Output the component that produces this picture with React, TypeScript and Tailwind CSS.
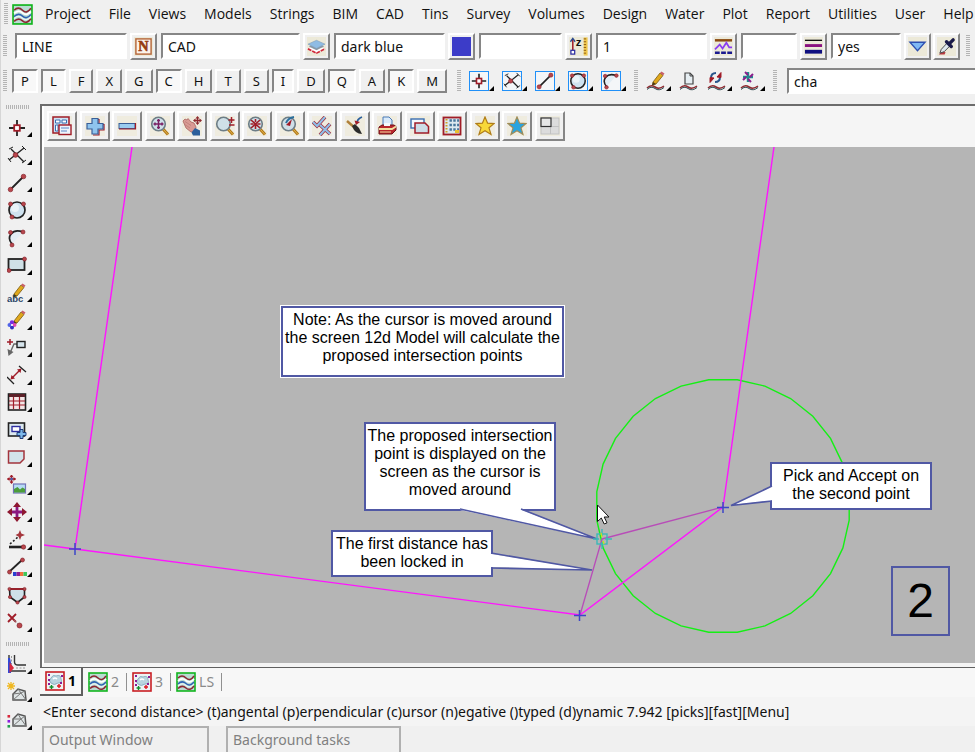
import { ReactNode, useState } from 'react';

const MENUS = [
  'Project', 'File', 'Views', 'Models', 'Strings', 'BIM', 'CAD', 'Tins', 'Survey',
  'Volumes', 'Design', 'Water', 'Plot', 'Report', 'Utilities', 'User', 'Help',
];

const SNAPS = ['P', 'L', 'F', 'X', 'G', 'C', 'H', 'T', 'S', 'I', 'D', 'Q', 'A', 'K', 'M'];

const RAISED = 'border-2 border-t-white border-l-white border-r-[#868686] border-b-[#868686] bg-[#f0f0f0]';
const SUNKEN = 'border-2 border-t-[#868686] border-l-[#868686] border-r-white border-b-white';

const RED = '#a01c28';
const DARK = '#222222';

function Dot({ x, y, r = 2 }: { x: number; y: number; r?: number }) {
  return <circle cx={x} cy={y} r={r} fill="#b8464c" stroke="#7c1a22" strokeWidth="0.6" />;
}

function Pencil() {
  return (
    <g>
      <path d="M7 11 L14 2 L17 4.5 L10 13 L6.5 14Z" fill="#e0a81c" stroke="#7a5a10" strokeWidth="0.8" />
      <path d="M14 2 L15.5 0.5 L18.5 2.5 L17 4.5Z" fill="#c8606a" />
      <path d="M7 11 L10 13 L6 14.5Z" fill="#4a3a1a" />
    </g>
  );
}

function Lens() {
  return (
    <g>
      <path d="M13 13 L18 18.5" stroke="#b07818" strokeWidth="3" />
      <path d="M13 13 L18 18.5" stroke="#e8b850" strokeWidth="1" />
      <circle cx="8.5" cy="8" r="6.8" fill="#cfe0e8" stroke="#6d7d86" strokeWidth="1.6" />
    </g>
  );
}

function Squiggle() {
  return (
    <g fill="none" strokeWidth="1.6">
      <path d="M1 17 Q5 13 9 16 T18 15" stroke="#8e2a30" />
      <path d="M1 18.5 Q5 14.5 9 17.5 T18 16.5" stroke="#2f4a50" strokeWidth="1" />
    </g>
  );
}

// drawn on a 20x20 grid
const ICONS: Record<string, ReactNode> = {
  point: (
    <g fill="none" strokeWidth="1.8">
      <path d="M10 2V7M10 13V18M2 10H7M13 10H18" stroke={DARK} />
      <rect x="7.2" y="7.2" width="5.6" height="5.6" stroke={RED} fill="#fff" />
    </g>
  ),
  cross: (
    <g>
      <path d="M2 15 L17 3 M4 4 L17 17" stroke={DARK} strokeWidth="1.4" />
      <path d="M2 4L6 2M1 13L4 17M15 1L19 5M15 18L19 15" stroke={DARK} />
      <Dot x={8.5} y={10} r={2.4} />
    </g>
  ),
  line: (
    <g>
      <path d="M4 16 L16 4" stroke={DARK} strokeWidth="1.8" />
      <Dot x={3.5} y={16.5} r={2.3} />
      <Dot x={16.5} y={3.5} r={2.3} />
    </g>
  ),
  circle: (
    <g>
      <circle cx="10" cy="10" r="8" fill="#cfe2ef" stroke={DARK} strokeWidth="1.7" />
      <circle cx="8" cy="8" r="4" fill="#eaf3f8" />
      <Dot x={3.5} y={4} />
      <Dot x={16.5} y={4} />
      <Dot x={5} y={17} />
    </g>
  ),
  arc: (
    <g>
      <path d="M5 16 A8 8 0 0 1 16 4 L16 4Z" fill="#e3edf4" />
      <path d="M5 16 C-1 9 5 0 16 4" fill="none" stroke={DARK} strokeWidth="1.7" />
      <Dot x={3.5} y={4.5} />
      <Dot x={16} y={4} />
      <Dot x={5} y={17} />
    </g>
  ),
  rect: (
    <g>
      <rect x="1.5" y="4" width="16" height="11" fill="#cfe0e6" stroke={DARK} strokeWidth="1.8" />
      <Dot x={17.5} y={4} />
      <Dot x={2} y={15.5} />
    </g>
  ),
  text: (
    <g>
      <Pencil />
      <text x="0" y="19" fontSize="9.5" fontWeight="bold" fontFamily="Liberation Sans, sans-serif" fill="#2c4668">abc</text>
    </g>
  ),
  symbol: (
    <g>
      <Pencil />
      <circle cx="5" cy="12.5" r="2.2" fill="#7a2be0" />
      <circle cx="2.5" cy="15" r="2" fill="#4f63e8" />
      <circle cx="7.5" cy="15" r="2" fill="#e04bb0" />
      <circle cx="5" cy="17.5" r="2" fill="#2f2fc0" />
      <circle cx="5" cy="15" r="1" fill="#fff" />
    </g>
  ),
  leader: (
    <g fill="none">
      <path d="M3 1V7M0 4H6" stroke={RED} strokeWidth="1.5" />
      <path d="M10 6H7L3 15" stroke="#666" strokeWidth="1.4" />
      <path d="M0.5 11L1.5 18L6.5 14Z" fill="#666" />
      <rect x="10" y="3.5" width="8" height="6" fill="#d5e4ec" stroke={DARK} strokeWidth="1.4" />
    </g>
  ),
  dimension: (
    <g>
      <path d="M5 13 L13 5" stroke={RED} strokeWidth="1.5" />
      <path d="M3.5 14.5L4.5 10L8 13.5ZM14.5 3.5L10 4.5L13.5 8Z" fill={RED} />
      <path d="M0 12L7 19M12 1L19 7" stroke={DARK} strokeWidth="1.3" />
    </g>
  ),
  table: (
    <g>
      <rect x="1.5" y="2" width="17" height="16" fill="#f3e6e6" stroke={DARK} strokeWidth="1.6" />
      <rect x="2" y="2" width="16" height="3" fill="#5c2028" />
      <path d="M6.5 5V17M12.5 5V17M2 9H18M2 13H18" stroke={RED} strokeWidth="1.2" />
    </g>
  ),
  window: (
    <g>
      <rect x="1.5" y="3" width="16" height="13" fill="#dce9ef" stroke={DARK} strokeWidth="1.6" />
      <rect x="5" y="6.5" width="8" height="5" fill="#fff" stroke="#2e2ea0" strokeWidth="1.4" />
      <path d="M13 9.5h3v3h3v3h-3v3h-3v-3h-3v-3h3z" fill="#7db8e8" stroke="#1f3a78" />
    </g>
  ),
  shape: <path d="M1.5 4H17V12L13 16H1.5Z" fill="#d3e3ea" stroke="#a3343c" strokeWidth="1.5" />,
  image: (
    <g>
      <path d="M4.5 0V8M0.5 4H8.5" stroke={RED} strokeWidth="1.6" />
      <path d="M4.5 0L6.5 2H2.5ZM4.5 9L6.5 6.5H2.5ZM0 4L2.5 2V6ZM9 4L6.5 2V6Z" fill={RED} />
      <rect x="3.3" y="2.8" width="2.4" height="2.4" fill="#4862b0" />
      <rect x="6.5" y="9" width="12" height="9" fill="#b6dcf4" stroke="#7273b8" strokeWidth="1.2" />
      <path d="M7 17.5V14L10.5 12L13 14.5L15.5 12.5L18 14V17.5Z" fill="#4c9d3a" />
    </g>
  ),
  move: (
    <g>
      <path d="M10 3V17M3 10H17" stroke="#8c1780" strokeWidth="2.8" />
      <path d="M10 0L14 5H6ZM10 20L14 15H6ZM0 10L5 6V14ZM20 10L15 6V14Z" fill="#8e1730" />
    </g>
  ),
  explode: (
    <g>
      <path d="M2 17H15" stroke={DARK} strokeWidth="2.6" />
      <Dot x={16.5} y={17} r={2.2} />
      <path d="M3 14L11 7" stroke={DARK} strokeWidth="1.6" strokeDasharray="2 2" />
      <path d="M13 0L14.3 3.5L18 5L14.3 6.5L13 10L11.5 6.5L8.5 5L11.5 3.5Z" fill="#a5363c" />
    </g>
  ),
  colour: (
    <g>
      <path d="M2 15L15 3" stroke={DARK} strokeWidth="1.8" />
      <Dot x={2.5} y={15} />
      <Dot x={15.5} y={3} />
      <rect x="6" y="15" width="3.5" height="4" fill="#2a3ed0" />
      <rect x="9.5" y="15" width="3.5" height="4" fill="#8a1e96" />
      <rect x="13" y="15" width="3.5" height="4" fill="#f0703c" />
      <rect x="16.5" y="15" width="3.5" height="4" fill="#3cc85a" />
    </g>
  ),
  polygon: (
    <g>
      <path d="M2.5 4H17.5V12L10.5 17.5L3 12Z" fill="#cfe0e8" stroke={DARK} strokeWidth="1.6" />
      <path d="M2.5 4H17.5" stroke={RED} strokeWidth="1.8" />
      <Dot x={2.5} y={4} r={1.6} />
      <Dot x={17.5} y={4} r={1.6} />
      <Dot x={3} y={12} r={1.6} />
      <Dot x={17.5} y={12} r={1.6} />
      <Dot x={10.5} y={17.5} r={1.6} />
    </g>
  ),
  remove: (
    <g>
      <path d="M1 2L9 10M9 2L1 10" stroke={RED} strokeWidth="1.8" />
      <path d="M7 8L12 13" stroke="#888" strokeDasharray="1 1" />
      <Dot x={12.5} y={13.5} r={2.5} />
    </g>
  ),
  road: (
    <g>
      <path d="M2 1V19" stroke="#333" strokeWidth="1.4" />
      <path d="M7.5 1V8Q7.5 11 11 11H19M4 17H19" fill="none" stroke="#333" strokeWidth="1.4" />
      <path d="M4.5 2V10M9 14H18" stroke="#999" strokeDasharray="2 1.5" />
      <path d="M1 4H3L4.5 11L4 19H1Z" fill="#2f48d8" />
      <path d="M2.5 8L7 14L2.5 19Z" fill="#d8283c" />
    </g>
  ),
  surfaceNew: (
    <g>
      <path d="M4 0V8M0 4H8M1 1L7 7M7 1L1 7" stroke="#f0b820" strokeWidth="1.3" />
      <path d="M6 18V12L11 7L18 9L19 18Z" fill="#dfe5e6" stroke="#555" strokeWidth="1.5" />
      <path d="M6 18L14 11L19 18M11 7L14 11L18 9M6 12L14 11" fill="none" stroke="#777" />
    </g>
  ),
  surfaceList: (
    <g>
      <path d="M6 16V9L11 4L18 6L19 16Z" fill="#dfe5e6" stroke="#555" strokeWidth="1.5" />
      <path d="M6 16L14 9L19 16M11 4L14 9L18 6M6 9L14 9" fill="none" stroke="#777" />
      <rect x="0.5" y="5" width="2.6" height="2.6" fill="#d8283c" />
      <rect x="0.5" y="10" width="2.6" height="2.6" fill="#8a1ee0" />
      <rect x="0.5" y="15" width="2.6" height="2.6" fill="#1fa04a" />
    </g>
  ),
  pencilString: <g><Squiggle /><Pencil /></g>,
  pageString: (
    <g>
      <Squiggle />
      <path d="M6 2H11L14 5V13H6Z" fill="#e6eef2" stroke="#444" strokeWidth="1.2" />
      <path d="M11 2V5H14" fill="none" stroke="#444" />
    </g>
  ),
  swapString: (
    <g>
      <Squiggle />
      <path d="M4 7Q4 2 9 2" fill="none" stroke="#29558c" strokeWidth="2" />
      <path d="M13 6Q13 11 8 11" fill="none" stroke="#29558c" strokeWidth="2" />
      <path d="M10 6L14 1.5V6.5ZM7 7L3 11.5V6.5Z" fill={RED} stroke={RED} />
    </g>
  ),
  nodeString: (
    <g>
      <Squiggle />
      <path d="M8 1V11M3 6H13" stroke="#1c8f8f" strokeWidth="2.4" />
      <path d="M5 1L8 4M13 3L10 6M11 11L8 8M3 9L6 6" stroke="#8a1e8a" strokeWidth="2" />
    </g>
  ),
  menuWindow: (
    <g>
      <rect x="1" y="1" width="16" height="16" fill="#cfe3f3" stroke={RED} strokeWidth="1.5" />
      <path d="M3.5 4H8V7H3.5ZM10 4H14.5V7H10ZM3.5 9H6V15H3.5Z" fill="#fff" stroke="#3a6eb0" />
      <rect x="7" y="9" width="12" height="9.5" fill="#eef4fb" stroke={RED} strokeWidth="1.4" />
      <path d="M9 12H17M9 15H15" stroke="#5a86c8" strokeWidth="1.2" />
    </g>
  ),
  plus: (
    <g>
      <path d="M8 3.5h6v5h5v5.5h-5v5h-6" fill="none" stroke={RED} strokeWidth="1.2" />
      <path d="M7 2.5h6v5h5v5.5h-5v5h-6v-5h-5v-5.5h5z" fill="#8fc4ee" stroke="#3a5f98" strokeWidth="1.2" />
    </g>
  ),
  minus: (
    <g>
      <rect x="2" y="7.5" width="16" height="5" fill="#9accf0" stroke="#3a5f98" />
      <path d="M18.5 7V13H2" fill="none" stroke={RED} strokeWidth="1.2" />
    </g>
  ),
  fit: <g><Lens /><path d="M8.5 3V13M3.5 8H13.5M7 4.5H10M7 11.5H10M5 6.5V9.5M12 6.5V9.5" stroke="#7b2064" strokeWidth="1.5" /></g>,
  pan: (
    <g>
      <path d="M1 5L3 3L5 4L6 2.5L9 6L12 7L14 11L13.5 14L9 16L4 12Z" fill="#d99a94" stroke="#a8645f" strokeWidth="0.8" />
      <path d="M2 8L8 12M3 5.5L9 9.5" stroke="#b87a74" strokeWidth="0.7" />
      <path d="M13 12L18 14.5V19.5H11L9.5 16.5Z" fill="#2c5f9c" />
      <path d="M15.5 1V8M12 4.5H19" stroke="#8e2a30" strokeWidth="1.4" />
      <path d="M15.5 0L17.5 2.5H13.5ZM15.5 9L17.5 6.5H13.5ZM11 4.5L13.5 2.5V6.5ZM20 4.5L17.5 2.5V6.5Z" fill="#8e2a30" />
    </g>
  ),
  zoom: <g><Lens /><path d="M16.5 1V7M13.5 4H19.5M14 9H19.5" stroke={RED} strokeWidth="1.5" /></g>,
  shrink: <g><Lens /><path d="M4 4L13 12M13 4L4 12M8.5 3V6M8.5 10V13M3.5 8H6.5M10.5 8H13.5" stroke={RED} strokeWidth="1.6" /></g>,
  previous: <g><Lens /><path d="M6 9L10 10L12 3Z" fill={RED} /><path d="M6 7Q8 2 14 1" fill="none" stroke="#2c6f9c" strokeWidth="2" /></g>,
  toggle: (
    <g fill="none">
      <path d="M1 6L5 10L13 1" stroke="#a03040" strokeWidth="3.6" />
      <path d="M1 6L5 10L13 1" stroke="#8fc0ea" strokeWidth="2" />
      <path d="M8 9L18 18M18 8L8 19" stroke="#a03040" strokeWidth="3.6" />
      <path d="M8 9L18 18M18 8L8 19" stroke="#8fc0ea" strokeWidth="2" />
    </g>
  ),
  brush: (
    <g>
      <path d="M2 5L10 12" stroke="#b0803a" strokeWidth="2.4" />
      <path d="M7 10L10 8L14 12L17 18Q10 18 7 10Z" fill="#2b2b2b" />
      <path d="M12 7Q12 3 17 1" fill="none" stroke="#2c5f9c" strokeWidth="1.8" />
      <path d="M9.5 4.5L15 6L11 9Z" fill={RED} />
    </g>
  ),
  print: (
    <g>
      <path d="M6 1H12L15 4V10H6Z" fill="#d9eafa" stroke="#4a7ab8" />
      <path d="M2 11L5 9H17L19 10.5V14L15 18H2Z" fill="#b8262c" stroke="#6e1218" />
      <path d="M2 13H15L19 10.5" fill="none" stroke="#f0dfa0" strokeWidth="1.8" />
      <path d="M3 16H14" stroke="#f0dfa0" />
      <path d="M7 7H13V10H7Z" fill="#f4f8fc" />
    </g>
  ),
  copy: (
    <g>
      <rect x="1" y="3" width="13" height="9" fill="#f3f8fc" stroke="#3a6eb0" strokeWidth="1.4" />
      <path d="M5 7H15L18.5 10.5V17H5Z" fill="#cddde6" stroke={RED} strokeWidth="1.5" />
    </g>
  ),
  grid: (
    <g>
      <rect x="1.5" y="1.5" width="17" height="17" fill="#dce8ef" stroke={RED} strokeWidth="1.8" />
      <path d="M4.5 3V17" stroke="#d0a020" strokeWidth="2" strokeDasharray="1.5 1.5" />
      <path d="M7.5 4.5H17M7.5 9H17M7.5 13.5H17" stroke="#46769c" strokeWidth="2.6" strokeDasharray="2.4 1.4" />
      <rect x="13" y="14" width="4" height="3" fill="#e8c030" />
    </g>
  ),
  star: <path d="M10 1L12.6 7.2L19 7.6L14 11.8L16 18.5L10 14.8L4 18.5L6 11.8L1 7.6L7.4 7.2Z" fill="#f8d838" stroke="#b07c18" strokeWidth="1.2" />,
  starBlue: <path d="M10 1L12.6 7.2L19 7.6L14 11.8L16 18.5L10 14.8L4 18.5L6 11.8L1 7.6L7.4 7.2Z" fill="#28a4e0" stroke="#a08c58" strokeWidth="1.2" />,
  layout: (
    <g>
      <rect x="1" y="2" width="18" height="16" fill="#dcdcdc" stroke="#c2c2c2" />
      <path d="M10.5 2V18M1 10.5H19" stroke="#c2c2c2" />
      <rect x="1" y="2" width="10" height="8.5" fill="#e6e6e6" stroke="#333" strokeWidth="1.2" />
    </g>
  ),
  name: (
    <g>
      <rect x="2" y="2" width="16" height="16" fill="#fbf2ea" stroke="#b5673a" strokeWidth="1.5" />
      <text x="10" y="15.2" textAnchor="middle" fontSize="15" fontWeight="bold" fontFamily="Liberation Serif, serif" fill="#963c10" stroke="#963c10" strokeWidth="0.6">N</text>
    </g>
  ),
  layers: (
    <g>
      <path d="M1 12.5L10 17L19 12.5L10 9Z" fill="#fff" />
      <path d="M1 12.5L10 17L19 12.5" fill="none" stroke="#d02838" strokeWidth="1.8" strokeDasharray="4 1" />
      <path d="M2 10L10 14L18 10L10 6Z" fill="#8a98a4" />
      <path d="M1 7.5L10 12L19 7.5L10 3.5Z" fill="#8fbce4" stroke="#7f9cb4" strokeWidth="0.6" />
    </g>
  ),
  swatch: <rect x="0" y="0" width="20" height="20" fill="#3c3cc8" />,
  height: (
    <g>
      <path d="M4 2V14" stroke={RED} strokeWidth="1.6" />
      <path d="M1.5 5L4 1.5L6.5 5" fill="none" stroke="#2a4a90" strokeWidth="1.4" />
      <rect x="2" y="14" width="4" height="4" fill="#fff" stroke="#2a2aa0" strokeWidth="1.3" />
      <text x="7" y="9.5" fontSize="12" fontWeight="bold" fontFamily="Liberation Sans, sans-serif" fill="#111">z</text>
      <rect x="15.5" y="0.5" width="4" height="19" fill="#f0c850" />
      <path d="M15.5 2H18M15.5 5H18M15.5 8H18M15.5 11H18M15.5 14H18M15.5 17H18" stroke="#8a5a10" />
    </g>
  ),
  styles: (
    <g fill="none">
      <path d="M1 3.5H19" stroke="#8a4a10" strokeWidth="2.6" />
      <path d="M1 13L6 8L9 12L13 6L16 11H19" stroke="#8a3cf0" strokeWidth="1.8" />
      <path d="M1 16.5H19" stroke="#1a1a90" strokeWidth="2.6" strokeDasharray="5 1.5" />
    </g>
  ),
  weight: (
    <g>
      <path d="M1 3.5H19" stroke="#111" strokeWidth="1.4" />
      <path d="M1 9H19" stroke="#8a1080" strokeWidth="3" />
      <path d="M1 15.5H19" stroke="#101080" strokeWidth="4" />
    </g>
  ),
  tinable: <path d="M2 5.5H18L10 14.5Z" fill="#7fb8f4" stroke="#2d4fb0" strokeWidth="1.4" />,
  dropper: (
    <g>
      <path d="M2 18.5L5 15L9 16L8 18.5Z" fill="#b83a40" />
      <path d="M3 17L4.5 13L11 6L14 9L7.5 15.5Z" fill="#dfe8ee" stroke="#444" />
      <path d="M10 5L15 10M12.5 7.5L17 3" stroke="#1a1a48" strokeWidth="3.6" strokeLinecap="round" />
    </g>
  ),
  plan: (
    <g>
      <rect x="1" y="1" width="18" height="18" fill="#b9dcd2" stroke="#12b41e" strokeWidth="1.6" />
      <path d="M2 6Q6 2 10 6T18 4" fill="none" stroke="#8c2632" strokeWidth="1.5" />
      <path d="M2 9Q6 5 10 8.5T18 7" fill="none" stroke="#fff" strokeWidth="1.7" />
      <path d="M2 12Q6 8 10 11.5T18 10" fill="none" stroke="#2f62b4" strokeWidth="1.5" />
      <path d="M2 14Q6 10 10 13.5T18 12" fill="none" stroke="#e8f4f4" strokeWidth="1.2" />
      <path d="M2 16.5Q6 12.5 10 16T18 14" fill="none" stroke="#8c2632" strokeWidth="1.5" />
    </g>
  ),
  perspective: (
    <g>
      <rect x="1" y="1" width="18" height="18" fill="#edf3f5" stroke="#c81e24" strokeWidth="1.6" />
      <path d="M6 12Q3 10 6 7Q8 3 11 5Q16 3 16 8Q18 12 13 12Q9 15 6 12Z" fill="#b9d5e0" stroke="#8fb2c2" />
      <path d="M8 8Q10 6 12 8" fill="none" stroke="#fff" strokeWidth="1.5" />
      <path d="M3 4H5M3 9H5M3 13H5M16 5H18M15 12H17" stroke="#8a1e96" strokeWidth="2" />
      <path d="M6.5 14V18M4.5 16H8.5" stroke="#128c28" strokeWidth="1.4" />
      <path d="M14 13V17M12 15H16" stroke="#e01820" strokeWidth="1.4" />
    </g>
  ),
};

function Icon({ name, className = 'size-5' }: { name: string; className?: string }) {
  return (
    <svg viewBox="0 0 20 20" className={`shrink-0 ${className}`} aria-hidden="true">
      {ICONS[name]}
    </svg>
  );
}

function Corner() {
  return (
    <svg viewBox="0 0 5 5" className="size-[5px] shrink-0" aria-hidden="true">
      <path d="M5 0V5H0Z" fill="#000" />
    </svg>
  );
}

function Grip() {
  return (
    <div className="h-[22px] w-1 shrink-0 bg-[repeating-linear-gradient(180deg,#b4b4b4_0_1px,#f0f0f0_1px_2px)]" />
  );
}

function SideGrip() {
  return (
    <div className="ml-[5px] h-1 w-6 shrink-0 bg-[repeating-linear-gradient(90deg,#b4b4b4_0_1px,#f0f0f0_1px_2px)]" />
  );
}

function Field({ label, value, width, icon }: { label: string; value: string; width: string; icon: string }) {
  const [text, setText] = useState(value);
  return (
    <div className="mr-1 flex shrink-0 items-center gap-[3px]">
      <input
        aria-label={label}
        value={text}
        onChange={(e) => setText(e.target.value)}
        className={`h-[26px] bg-white px-[5px] outline-none ${SUNKEN} ${width}`}
      />
      <button type="button" aria-label={`Choose ${label}`} className={`flex size-[27px] items-center justify-center ${RAISED}`}>
        <Icon name={icon} className="size-[19px] bg-[#ece9d8]" />
      </button>
    </div>
  );
}

const SNAP_TOOLS = ['point', 'cross', 'line', 'circle', 'arc'];

const DRAW_TOOLS = [
  'point', 'cross', 'line', 'circle', 'arc', 'rect', 'text', 'symbol', 'leader', 'dimension',
  'table', 'window', 'shape', 'image', 'move', 'explode', 'colour', 'polygon', 'remove',
];

const SURFACE_TOOLS = ['road', 'surfaceNew', 'surfaceList'];

const VIEW_TOOLS = [
  'menuWindow', 'plus', 'minus', 'fit', 'pan', 'zoom', 'shrink', 'previous',
  'toggle', 'brush', 'print', 'copy', 'grid', 'star', 'starBlue', 'layout',
];

const VIEWS = [
  { label: '1', icon: 'perspective' },
  { label: '2', icon: 'plan' },
  { label: '3', icon: 'perspective' },
  { label: 'LS', icon: 'plan' },
];

function SideTool({ name }: { name: string }) {
  return (
    <button type="button" aria-label={name} className="flex items-center pl-1.5">
      <Icon name={name} className="size-5" />
      <span className="self-end pb-1"><Corner /></span>
    </button>
  );
}

// the view draws circles as 28 chords at this zoom
const SIDES = 28;
const circlePoints = Array.from({ length: SIDES }, (_, i) => {
  const a = ((i + 0.5) * 2 * Math.PI) / SIDES;
  return `${(723 + 127 * Math.sin(a)).toFixed(1)},${(506 - 127 * Math.cos(a)).toFixed(1)}`;
}).join(' ');

const CALLOUT = 'absolute border-2 border-[#5058a4] bg-white pt-[3px] text-center text-base leading-[18px]';

function PlanView() {
  return (
    <div className="relative flex-1 overflow-hidden bg-[#b5b5b5] font-['Liberation_Sans',Arial,sans-serif] text-black">
      <svg viewBox="44 147 931 516" width="931" height="516" className="absolute top-0 left-0" fill="none">
        <polygon points={circlePoints} stroke="#14f014" strokeWidth="1.4" />
        <g stroke="#b84cb8" strokeWidth="1.3">
          <path d="M602 539L723 507" />
          <path d="M602 539L580 615" />
        </g>
        <g stroke="#ff14ff" strokeWidth="1.4">
          <path d="M132 147L75 549" />
          <path d="M44 545L75 549L580 615L723 507L774 147" />
        </g>
        <g stroke="#3c46c8" strokeWidth="1.5">
          <path d="M69 549H81M75 543V555" />
          <path d="M574 615.5H586M579.5 610V621" />
          <path d="M717 507.5H729M723 502V513" />
        </g>
      </svg>

      <div className={`${CALLOUT} top-[159px] left-[237px] h-[71px] w-[283px] outline-1 outline-white`}>
        Note: As the cursor is moved around<br />the screen 12d Model will calculate the<br />proposed intersection points
      </div>
      <div className={`${CALLOUT} top-[275px] left-[320px] h-[89px] w-[192px]`}>
        The proposed intersection<br />point is displayed on the<br />screen as the cursor is<br />moved around
      </div>
      <div className={`${CALLOUT} top-[383px] left-[287px] h-[47px] w-[162px]`}>
        The first distance has<br />been locked in
      </div>
      <div className={`${CALLOUT} top-[315px] left-[726px] h-[48px] w-[162px]`}>
        Pick and Accept on<br />the second point
      </div>
      <div className="absolute top-[419px] left-[847px] flex h-[70px] w-[59px] items-center justify-center border-2 border-[#5058a4] text-5xl">
        2
      </div>

      <svg viewBox="44 147 931 516" width="931" height="516" className="pointer-events-none absolute top-0 left-0" fill="none">
        <g fill="#fff" stroke="none">
          <path d="M460 507L521 507L522 510L597 539L460 510Z" />
          <path d="M489 554H492L592 570L489 567Z" />
          <path d="M773 486L770 487L731 505L770 501L773 500Z" />
        </g>
        <g stroke="#5058a4" strokeWidth="1.6">
          <path d="M460 509L597 539L521 509" />
          <path d="M491 553L592 570L491 568" />
          <path d="M772 486L731 505.5L772 501" />
        </g>
        <g stroke="#3cb8b8" strokeWidth="1.4">
          <rect x="597" y="534" width="10" height="10" />
          <path d="M593 539H599M605 539H612M602 529V536M602 542V549" />
        </g>
        <path d="M601 533L602 537M603 541L604 544" stroke="#c8e020" strokeWidth="1.4" />
        <path d="M597.5 505V521.5L601.3 518L604.2 524L607 522.8L604.2 517H609Z" fill="#fff" stroke="#111" strokeWidth="1" />
      </svg>
    </div>
  );
}

export default function App() {
  const [pressed, setPressed] = useState(['P', 'L', 'C', 'I', 'Q', 'K']);
  const [activeView, setActiveView] = useState('1');
  const [filter, setFilter] = useState('cha');

  const togglePressed = (key: string) => {
    setPressed(pressed.includes(key) ? pressed.filter((k) => k !== key) : [...pressed, key]);
  };

  return (
    <div className="flex min-h-screen flex-col overflow-hidden border-l border-[#d6d6d6] bg-[#f0f0f0] font-['Noto_Sans','Open_Sans',sans-serif] text-sm text-[#111]">
      <nav className="flex h-7 shrink-0 items-center pl-[3px] font-['Open_Sans','Noto_Sans',sans-serif]">
        <Grip />
        <Icon name="plan" className="mr-3 ml-1 size-[21px]" />
        <div className="flex gap-[18px]">
          {MENUS.map((menu) => (
            <button key={menu} type="button">{menu}</button>
          ))}
        </div>
      </nav>

      <div className="flex h-9 shrink-0 items-center pl-0.5">
        <Grip />
        <div className="w-2 shrink-0" />
        <Field label="string name" value="LINE" width="w-[112px]" icon="name" />
        <Field label="model" value="CAD" width="w-[139px]" icon="layers" />
        <Field label="colour" value="dark blue" width="w-[111px]" icon="swatch" />
        <Field label="height" value="" width="w-[83px]" icon="height" />
        <Field label="linestyle" value="1" width="w-[111px]" icon="styles" />
        <Field label="weight" value="" width="w-[56px]" icon="weight" />
        <Field label="tinable" value="yes" width="w-[70px]" icon="tinable" />
        <button type="button" aria-label="Pick attributes" className={`-ml-0.5 flex size-[27px] shrink-0 items-center justify-center ${RAISED}`}>
          <Icon name="dropper" className="size-[19px] bg-[#ece9d8]" />
        </button>
        <div className="w-1.5 shrink-0" />
        <Grip />
      </div>

      <div className="flex h-[34px] shrink-0 items-center pl-0.5">
        <Grip />
        <div className="ml-[5px] flex gap-[3px]">
          {SNAPS.map((key) => (
            <button
              key={key}
              type="button"
              aria-pressed={pressed.includes(key)}
              onClick={() => togglePressed(key)}
              className={`h-6 px-[7px] text-[13px] leading-5 ${pressed.includes(key) ? `${SUNKEN} bg-[#f8f8f8]` : RAISED}`}
            >
              {key}
            </button>
          ))}
        </div>
        <div className="ml-2.5 flex items-center gap-2">
          <Grip />
          <div className="flex gap-2">
            {SNAP_TOOLS.map((name) => (
              <button key={name} type="button" aria-label={`Snap ${name}`} className="flex items-end">
                <span className="border border-[#2090f8] bg-[#f4f6f8]">
                  <Icon name={name} className="size-[18px]" />
                </span>
                <Corner />
              </button>
            ))}
          </div>
          <Grip />
          <div className="flex gap-2">
            {['pencilString', 'pageString', 'swapString', 'nodeString'].map((name) => (
              <button key={name} type="button" aria-label={name} className="flex items-end">
                <Icon name={name} className="size-5" />
                {name !== 'pageString' && <Corner />}
              </button>
            ))}
          </div>
          <Grip />
        </div>
        <input
          aria-label="Filter"
          value={filter}
          onChange={(e) => setFilter(e.target.value)}
          className={`ml-2.5 h-[26px] min-w-0 flex-1 border-r-0 bg-white px-[5px] outline-none ${SUNKEN}`}
        />
      </div>

      <div className="flex flex-1">
        <aside className="flex w-[39px] shrink-0 flex-col pt-[7px]">
          <SideGrip />
          <div className="mt-[5px] grid flex-1 auto-rows-fr">
            {DRAW_TOOLS.map((name) => (
              <SideTool key={name} name={name} />
            ))}
          </div>
          <div className="h-1.5" />
          <SideGrip />
          <div className="mt-1 mb-[18px] grid auto-rows-[28px]">
            {SURFACE_TOOLS.map((name) => (
              <SideTool key={name} name={name} />
            ))}
          </div>
        </aside>

        <main className="flex min-w-0 flex-1 flex-col pt-1.5">
          <div className="flex flex-1 flex-col border-t-2 border-l-2 border-[#6c6c6c]">
            <div className="flex flex-1 flex-col border-b-4 border-l-2 border-white border-b-[#f4f4f4]">
              <div className="flex h-[41px] shrink-0 items-start bg-[#f5f5f5] pt-[5px] pl-[3px]">
                <div className="flex w-[518px] justify-between">
                  {VIEW_TOOLS.map((name) => (
                    <button key={name} type="button" aria-label={name} className={`flex size-[30px] items-center justify-center ${RAISED}`}>
                      <Icon name={name} className="size-5 bg-[#efecdf]" />
                    </button>
                  ))}
                </div>
              </div>
              <PlanView />
            </div>
          </div>

          <div className="flex h-[30px] shrink-0 items-start border-t border-[#606060] bg-[#f7f7f7]">
            {VIEWS.map((view) => (
              <button
                key={view.label}
                type="button"
                onClick={() => setActiveView(view.label)}
                className={`flex h-7 items-center gap-[3px] pl-[5px] ${
                  view.label === activeView
                    ? 'border-r-2 border-b-2 border-[#606060] pr-[5px] font-bold text-black'
                    : 'text-[#8a8a8a]'
                }`}
              >
                <Icon name={view.icon} className="size-5" />
                {view.label}
                {view.label !== activeView && <span className="ml-1 h-[18px] w-px bg-[#909090]" />}
              </button>
            ))}
          </div>

          <div className="flex h-[29px] shrink-0 items-center overflow-hidden bg-[#f4f4f4] pl-[3px] whitespace-nowrap">
            &lt;Enter second distance&gt; (t)angental (p)erpendicular (c)ursor (n)egative ()typed (d)ynamic 7.942 [picks][fast][Menu]
          </div>

          <div className="flex h-[26px] shrink-0 gap-[17px] pl-0.5 text-[#808080]">
            <button type="button" className="w-[167px] border-2 border-b-0 border-[#b0b0b0] px-[5px] text-left">Output Window</button>
            <button type="button" className="w-[175px] border-2 border-b-0 border-[#b0b0b0] px-[5px] text-left">Background tasks</button>
          </div>
        </main>
      </div>
    </div>
  );
}
